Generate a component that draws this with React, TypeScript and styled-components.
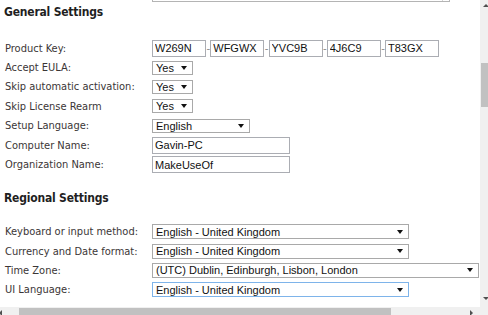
import React from 'react';
import styled, { createGlobalStyle } from 'styled-components';

const GlobalStyle = createGlobalStyle`
  html, body {
    margin: 0;
    padding: 0;
    background: #fff;
    overflow: hidden;
  }
`;

const LABEL_FONT = "'DejaVu Sans Condensed', 'DejaVu Sans', sans-serif";
const FIELD_FONT = "'Liberation Sans', Arial, sans-serif";

const Window = styled.div`
  width: 488px;
  height: 315px;
  display: grid;
  grid-template-columns: 480px 8px;
  grid-template-rows: 307px 8px;
  overflow: hidden;
  background: #fff;
`;

const Page = styled.div`
  overflow: hidden;
  font-family: ${LABEL_FONT};
`;

const TopBox = styled.div`
  box-sizing: border-box;
  display: flex;
  justify-content: flex-end;
  width: 298px;
  height: 2px;
  margin-left: 152px;
  border: 1px solid #b4b4b4;
  border-top: none;
`;

const TopGutter = styled.div`
  width: 6px;
  border-left: 1px solid #d4d4d4;
`;

const Heading = styled.h2<{ $top: number; $bottom: number }>`
  margin: ${(p) => p.$top}px 0 ${(p) => p.$bottom}px 4px;
  font: bold 12px/20px ${LABEL_FONT};
  letter-spacing: -0.2px;
  color: #1f1f1f;
`;

const Form = styled.div<{ $row: number }>`
  display: grid;
  grid-template-columns: 147px auto;
  grid-auto-rows: ${(p) => p.$row}px;
  align-items: center;
  padding-left: 5px;
`;

const Label = styled.div`
  font-size: 11px;
  color: #3b3636;
  white-space: nowrap;
`;

const Field = styled.div`
  display: flex;
  align-items: center;
`;

const TextBox = styled.input<{ $w: number }>`
  box-sizing: border-box;
  width: ${(p) => p.$w}px;
  height: 17px;
  margin: 0;
  padding: 0 2px;
  border: 1px solid #abadb3;
  border-radius: 0;
  outline: none;
  font: 11px/15px ${FIELD_FONT};
  color: #111;
  background: #fff;
`;

const Dash = styled.span`
  width: 4.25px;
  font: 11px ${FIELD_FONT};
  color: #8a8a8a;
  text-align: right;
  overflow: hidden;
`;

const SelectBox = styled.div<{ $w: number; $h: number; $focus?: boolean }>`
  box-sizing: border-box;
  display: flex;
  align-items: center;
  justify-content: space-between;
  width: ${(p) => p.$w}px;
  height: ${(p) => p.$h}px;
  padding: 0 5px 0 3px;
  border: 1px solid ${(p) => (p.$focus ? '#7eb4ea' : '#a9a9a9')};
  font: 11px ${FIELD_FONT};
  color: #111;
  white-space: nowrap;
  background: #fff;
`;

const Arrow = styled.span`
  width: 0;
  height: 0;
  border-left: 3px solid transparent;
  border-right: 3px solid transparent;
  border-top: 4px solid #111;
`;

const VBar = styled.div`
  grid-column: 2;
  grid-row: 1 / 3;
  display: flex;
  flex-direction: column;
  background: #f0f0f0;
  overflow: hidden;
`;

const HBar = styled.div`
  display: flex;
  background: #f0f0f0;
  overflow: hidden;
`;

const VThumb = styled.div`
  height: 44px;
  margin: 56px 0 0 1px;
  background: #c1c1c1;
`;

const HThumb = styled.div`
  width: 372px;
  margin: 1px 0 0 17px;
  background: #c1c1c1;
`;

const Spacer = styled.div`
  flex: 1;
`;

const Tri = styled.span<{ $dir: 'up' | 'down' | 'left' | 'right' }>`
  flex: none;
  width: 0;
  height: 0;
  ${(p) =>
    p.$dir === 'up' || p.$dir === 'down'
      ? `border-left: 3px solid transparent; border-right: 3px solid transparent;
         border-${p.$dir === 'up' ? 'bottom' : 'top'}: 3px solid #505050;
         margin: ${p.$dir === 'up' ? '4px 0 0 3px' : '0 0 15px 3px'};`
      : `border-top: 3px solid transparent; border-bottom: 3px solid transparent;
         border-${p.$dir === 'left' ? 'right' : 'left'}: 3px solid #505050;
         margin: ${p.$dir === 'left' ? '3px 0 0 -1px' : '3px 7px 0 0'};`}
`;

const Select = ({ value, w, h = 14, focus }: { value: string; w: number; h?: number; focus?: boolean }) => (
  <SelectBox $w={w} $h={h} $focus={focus}>
    <span>{value}</span>
    <Arrow />
  </SelectBox>
);

const keyParts = ['W269N', 'WFGWX', 'YVC9B', '4J6C9', 'T83GX'];

const regional = [
  { label: 'Keyboard or input method:', value: 'English - United Kingdom', w: 257 },
  { label: 'Currency and Date format:', value: 'English - United Kingdom', w: 257 },
  { label: 'Time Zone:', value: '(UTC) Dublin, Edinburgh, Lisbon, London', w: 327 },
  { label: 'UI Language:', value: 'English - United Kingdom', w: 257, focus: true },
];

export default function App() {
  return (
    <>
      <GlobalStyle />
      <Window>
        <Page>
          <TopBox>
            <TopGutter />
          </TopBox>
          <Heading $top={0} $bottom={16.5}>General Settings</Heading>
          <Form $row={19.4}>
            <Label>Product Key:</Label>
            <Field>
              {keyParts.map((part, i) => (
                <React.Fragment key={part}>
                  {i > 0 && <Dash>-</Dash>}
                  <TextBox $w={54} defaultValue={part} readOnly />
                </React.Fragment>
              ))}
            </Field>
            <Label>Accept EULA:</Label>
            <Field>
              <Select value="Yes" w={41} />
            </Field>
            <Label>Skip automatic activation:</Label>
            <Field>
              <Select value="Yes" w={41} />
            </Field>
            <Label>Skip License Rearm</Label>
            <Field>
              <Select value="Yes" w={41} />
            </Field>
            <Label>Setup Language:</Label>
            <Field>
              <Select value="English" w={98} />
            </Field>
            <Label>Computer Name:</Label>
            <Field>
              <TextBox $w={138} defaultValue="Gavin-PC" readOnly />
            </Field>
            <Label>Organization Name:</Label>
            <Field>
              <TextBox $w={138} defaultValue="MakeUseOf" readOnly />
            </Field>
          </Form>
          <Heading $top={13.7} $bottom={14.3}>Regional Settings</Heading>
          <Form $row={19.3}>
            {regional.map((r) => (
              <React.Fragment key={r.label}>
                <Label>{r.label}</Label>
                <Field>
                  <Select value={r.value} w={r.w} h={15} focus={r.focus} />
                </Field>
              </React.Fragment>
            ))}
          </Form>
        </Page>
        <VBar>
          <Tri $dir="up" />
          <VThumb />
          <Spacer />
          <Tri $dir="down" />
        </VBar>
        <HBar>
          <Tri $dir="left" />
          <HThumb />
          <Spacer />
          <Tri $dir="right" />
        </HBar>
      </Window>
    </>
  );
}
